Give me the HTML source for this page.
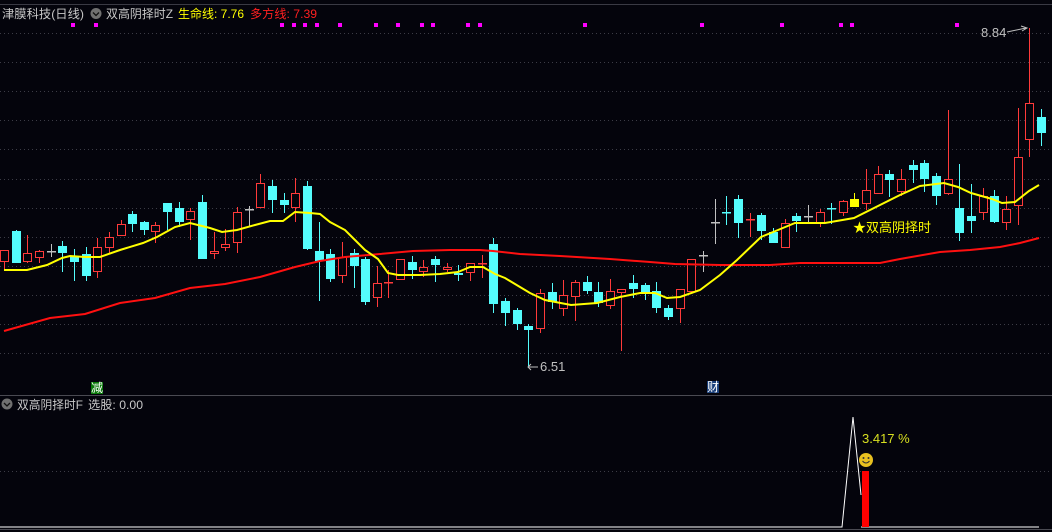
<!DOCTYPE html>
<html><head><meta charset="utf-8"><style>
html,body{margin:0;padding:0;background:#04040c;width:1052px;height:532px;overflow:hidden}
svg{display:block}
text{font-family:"Liberation Sans","Noto Sans CJK SC",sans-serif;font-size:12px}
</style></head><body>
<svg id="s" width="1052" height="532" xmlns="http://www.w3.org/2000/svg">
<rect width="1052" height="532" fill="#04040c"/>
<line x1="0" y1="4.5" x2="1052" y2="4.5" stroke="#3a3a44"/>
<g id="grid" stroke="#3c3c46" stroke-dasharray="1,3"></g>
<line x1="0" y1="395.5" x2="1052" y2="395.5" stroke="#4a4a52"/>
<line x1="0" y1="529.5" x2="1052" y2="529.5" stroke="#4a4a52"/>
<g id="c"></g>
<polyline id="red" fill="none" stroke="#ff1010" stroke-width="2"/>
<polyline id="yel" fill="none" stroke="#ffff00" stroke-width="2"/>
<g id="dots" fill="#ff00ff"></g>
<text x="2" y="18" fill="#c8c8c8" textLength="82" lengthAdjust="spacingAndGlyphs">津膜科技(日线)</text>
<circle cx="96" cy="13.5" r="5.5" fill="#707070"/><path d="M93 12.5l3 3 3-3" stroke="#111" fill="none" stroke-width="1.3"/>
<text x="106" y="18" fill="#c8c8c8" textLength="67" lengthAdjust="spacingAndGlyphs">双高阴择时Z</text>
<text x="178" y="18" fill="#ffff00" textLength="66" lengthAdjust="spacingAndGlyphs">生命线: 7.76</text>
<text x="250" y="18" fill="#ff2020" textLength="67" lengthAdjust="spacingAndGlyphs">多方线: 7.39</text>
<text x="981" y="37" fill="#c0c0c0" style="font-size:13px">8.84</text>
<path d="M1007 32l19 -4M1021 26l6 2-5 3" stroke="#c0c0c0" fill="none"/>
<text x="540" y="371" fill="#c0c0c0" style="font-size:13px">6.51</text>
<path d="M528 367h10M531 364l-3 3 3 3" stroke="#c0c0c0" fill="none"/>
<text x="853" y="232" fill="#ffff00" style="font-size:13px">★双高阴择时</text>
<rect x="91" y="382" width="12" height="12" fill="#0a7a0a"/><text x="91" y="392" fill="#fff">减</text>
<rect x="707" y="381" width="12" height="12" fill="#1a3f7a"/><text x="707" y="391" fill="#fff">财</text>
<circle cx="7" cy="404" r="5.5" fill="#707070"/><path d="M4 403l3 3 3-3" stroke="#111" fill="none" stroke-width="1.3"/>
<text x="17" y="409" fill="#c8c8c8" textLength="66" lengthAdjust="spacingAndGlyphs">双高阴择时F</text>
<text x="88" y="409" fill="#c8c8c8" textLength="55" lengthAdjust="spacingAndGlyphs">选股: 0.00</text>
<line x1="0" y1="471.5" x2="1052" y2="471.5" stroke="#3c3c46" stroke-dasharray="1,3"/>
<polyline points="0,527 842,527 853,417 861,495" fill="none" stroke="#fff" stroke-width="1"/>
<line x1="861" y1="527" x2="1039" y2="527" stroke="#fff"/>
<rect x="862" y="471" width="7" height="56" fill="#ff0000"/>
<circle cx="866" cy="460" r="7" fill="#e8c020"/>
<circle cx="863.5" cy="458" r="1" fill="#333"/><circle cx="868.5" cy="458" r="1" fill="#333"/>
<path d="M862.5 461q3.5 4 7 0" stroke="#333" fill="none"/>
<text x="862" y="443" fill="#d8e020" style="font-size:13px">3.417 %</text>
</svg>
<script>
var NS="http://www.w3.org/2000/svg";
function el(p,t,a){var e=document.createElementNS(NS,t);for(var k in a)e.setAttribute(k,a[k]);p.appendChild(e);return e;}
var g=document.getElementById('grid');
[33,62,91,120,149,179,208,237,266,295,324,353].forEach(function(y){el(g,'line',{x1:0,y1:y+.5,x2:1052,y2:y+.5});});
var C=[
['u',250,261,250,270],['d',231,263,230,263],['u',253,261,235,263],['u',251,257,250,263],['g',251,251,244,257],
['d',246,253,241,272],['d',256,262,249,281],['d',254,276,247,281],['u',247,271,238,278],['u',237,247,232,253],
['u',224,235,220,235],['d',214,224,211,232],['d',222,230,221,235],['u',225,231,222,243],['d',203,212,203,230],
['d',208,222,202,227],['u',211,219,208,240],['d',202,259,195,259],['u',251,253,232,259],['u',244,247,229,251],
['u',212,242,207,253],['g',209,209,206,227],['u',183,207,174,207],['d',186,200,180,213],['d',200,205,193,213],
['u',193,207,178,222],['d',186,249,181,250],['d',251,261,222,301],['d',254,279,249,282],['u',257,275,242,283],
['d',253,266,249,288],['d',259,302,257,305],['u',283,297,266,307],['r',282,283,270,298],['u',259,279,259,279],
['d',262,270,256,279],['u',267,271,260,277],['d',259,265,256,282],['u',267,269,263,272],['d',273,275,265,281],
['u',263,272,264,281],['r',263,264,255,278],['d',244,304,238,313],['d',301,313,298,326],['d',310,324,308,330],
['d',326,330,324,366],['u',293,328,289,333],['d',292,302,283,309],['u',295,308,280,316],['u',282,296,280,321],
['d',282,291,276,294],['d',292,303,282,307],['u',291,305,279,309],['u',289,292,289,351],['d',283,289,275,298],
['d',285,292,283,300],['d',291,308,282,313],['d',308,317,305,320],['u',289,308,289,323],['u',259,291,259,291],
['g',255,255,251,272],['g',222,222,199,244],['c',212,212,196,225],['d',199,223,195,238],['r',219,219,213,237],
['d',215,231,213,240],['d',232,243,228,243],['u',223,247,219,247],['d',216,221,213,232],['g',216,216,205,223],
['u',212,222,209,227],['c',208,208,203,224],['u',201,212,200,216],['y',199,207,193,207],['u',190,203,169,210],
['u',174,193,166,193],['d',174,180,170,197],['u',179,191,169,196],['d',165,170,160,183],['d',163,179,160,192],
['d',176,196,173,205],['u',179,193,110,195],['d',208,233,164,241],['d',216,221,184,233],['u',196,212,188,220],
['d',196,222,190,223],['u',209,222,196,230],['u',157,205,108,225],['u',103,139,28,157],['d',117,133,109,146]];
var cg=document.getElementById('c');
C.forEach(function(k,i){
 var x=Math.round(4+11.65*i),t=k[0],o=k[1],c=k[2],h=k[3],l=k[4];
 var col={u:'#ff3a3a',r:'#ff3a3a',d:'#54fcfc',c:'#54fcfc',g:'#c0c0c0',y:'#ffff00'}[t];
 el(cg,'line',{x1:x+.5,y1:h,x2:x+.5,y2:l,stroke:col});
 if(t=='u') el(cg,'rect',{x:x-3.5,y:o+.5,width:8,height:Math.max(c-o,1),fill:'#04040c',stroke:col});
 else if(t=='d'||t=='y') el(cg,'rect',{x:x-4,y:o,width:9,height:Math.max(c-o,2),fill:col});
 else el(cg,'rect',{x:x-4,y:o,width:9,height:1.5,fill:col});
});
document.getElementById('yel').setAttribute('points',"4,270 27,270 47,265 62,258 70,256 85,257 100,257 120,250 143,243 157,237 175,227 190,223 210,228 222,232 237,230 255,225 270,221 283,221 295,212 310,213 320,214 330,222 345,230 355,240 365,250 378,259 388,273 398,275 420,275 440,274 458,272 470,267 483,267 495,274 505,278 520,287 530,293 545,300 571,305 597,303 620,297 640,293 655,293 667,298 680,297 700,290 720,275 737,260 761,237 778,230 795,223 825,223 854,218 876,207 900,195 920,186 944,183 958,187 971,193 992,199 1002,203 1015,202 1029,191 1039,185");
document.getElementById('red').setAttribute('points',"4,331 50,318 85,314 120,303 155,298 190,288 225,284 260,277 295,267 320,261 345,257 380,254 413,251 450,250 480,250 493,251 520,254 560,256 610,259 650,262 675,264 720,265 770,265 800,263 880,263 900,259 940,252 970,250 1000,247 1020,243 1039,238");
var dg=document.getElementById('dots');
[73,96,282,294,305,317,340,376,398,422,433,468,480,585,702,782,841,852,957].forEach(function(x){el(dg,'rect',{x:x-2,y:23,width:4,height:4});});
</script>
</body></html>
